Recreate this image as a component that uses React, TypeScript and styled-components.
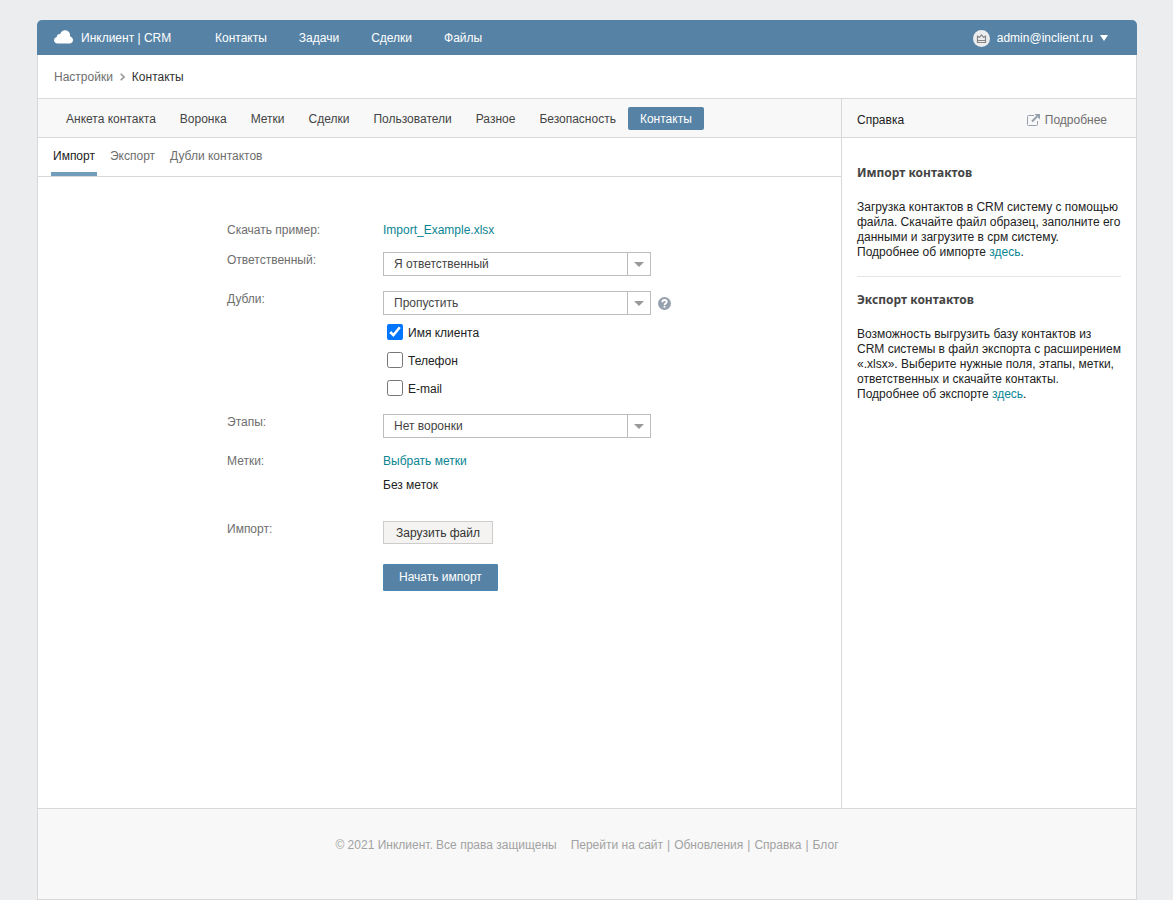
import React from "react";
import styled, { createGlobalStyle } from "styled-components";

const color = {
  brand: "#5683a5",
  line: "#d8d8d8",
  bar: "#f8f8f8",
  text: "#222",
  dim: "#6e6e6e",
  link: "#0a8593",
};

const GlobalStyle = createGlobalStyle`
  *, *::before, *::after { box-sizing: border-box; }
  body {
    margin: 0;
    background: #ecedef;
    color: ${color.text};
    font: 12px/15px "Liberation Sans", Arial, sans-serif;
  }
  a { color: inherit; text-decoration: none; }
  button, select, input { font: inherit; }
  h2, p { margin: 0; }
`;

const Page = styled.div`
  display: flex;
  flex-direction: column;
  min-height: 100vh;
  padding: 20px 36px 0 37px;
`;

const Header = styled.header`
  display: flex;
  align-items: center;
  height: 35px;
  padding: 1px 29px 0 17px;
  border-radius: 5px 5px 0 0;
  background: ${color.brand};
  color: #fff;
  font-weight: 500;
`;

const Brand = styled.a`
  display: flex;
  align-items: center;
  gap: 8px;
  width: 161px;

  svg { margin-bottom: 2px; }
`;

const MainNav = styled.nav`
  display: flex;
  gap: 32px;
  flex: 1;
  padding-top: 1px;
`;

const Account = styled.button`
  display: flex;
  align-items: center;
  gap: 7px;
  padding: 0;
  border: 0;
  background: none;
  color: inherit;
  font-weight: 500;
  cursor: pointer;
`;

const Sheet = styled.div`
  flex: 1;
  display: flex;
  flex-direction: column;
  border: 1px solid ${color.line};
  border-top: 0;
  background: #fff;
`;

const Breadcrumbs = styled.nav`
  display: flex;
  align-items: center;
  gap: 7px;
  height: 44px;
  padding: 1px 0 0 16px;
  border-bottom: 1px solid ${color.line};
  color: ${color.dim};

  [aria-current] { color: #333; }
`;

const Columns = styled.div`
  flex: 1;
  display: grid;
  grid-template-columns: minmax(0, 1fr) 295px;
`;

const Main = styled.main`
  min-width: 0;
`;

const Tabs = styled.nav`
  display: flex;
  align-items: center;
  height: 39px;
  padding-left: 16px;
  border-bottom: 1px solid ${color.line};
  background: ${color.bar};
`;

const Tab = styled.a<{ $active?: boolean }>`
  padding: 5px 12px 3px;
  border-radius: 2px;
  background: ${(p) => (p.$active ? color.brand : "transparent")};
  color: ${(p) => (p.$active ? "#fff" : "#444")};
  font-weight: ${(p) => (p.$active ? 500 : 400)};
`;

const SubTabs = styled.nav`
  display: flex;
  gap: 11px;
  height: 39px;
  padding-left: 13px;
  border-bottom: 1px solid ${color.line};
`;

const SubTab = styled.a<{ $active?: boolean }>`
  padding: 11px 2px 0;
  border-bottom: 4px solid ${(p) => (p.$active ? "#719dbc" : "transparent")};
  color: ${(p) => (p.$active ? "#222" : color.dim)};
`;

const Form = styled.form`
  display: flex;
  flex-direction: column;
  gap: 14px;
  padding: 45px 16px 45px 189px;
`;

const FormRow = styled.div<{ $after?: number }>`
  display: grid;
  grid-template-columns: 156px minmax(0, 1fr);
  align-items: start;
  margin-bottom: ${(p) => p.$after ?? 1}px;
`;

const Caption = styled.label`
  padding-top: 1px;
  color: ${color.dim};
`;

const Value = styled.div<{ $gap?: number }>`
  display: flex;
  flex-direction: column;
  align-items: flex-start;
  gap: ${(p) => p.$gap ?? 0}px;
`;

const Link = styled.a`
  color: ${color.link};
`;

const FieldLink = styled(Link)`
  padding-top: 1px;
`;

const Picker = styled.div`
  display: flex;
  align-items: center;
  gap: 7px;
`;

const SelectFrame = styled.div`
  position: relative;
  width: 268px;
  max-width: 100%;
`;

const SelectBox = styled.select`
  display: block;
  appearance: none;
  width: 100%;
  height: 24px;
  padding: 0 34px 0 10px;
  border: 1px solid #bdbdbd;
  border-radius: 0;
  background: #fff;
  color: #444;
`;

const SelectArrow = styled.span`
  position: absolute;
  inset: 1px 1px 1px auto;
  display: grid;
  place-items: center;
  width: 23px;
  border-left: 1px solid #bdbdbd;
  pointer-events: none;
`;

const Check = styled.label`
  display: flex;
  align-items: center;
  gap: 5px;
  height: 22px;
  padding-left: 4px;
`;

const CheckText = styled.span`
  padding-top: 2px;
`;

const CheckInput = styled.input`
  width: 16px;
  height: 16px;
  margin: 0;
  accent-color: #0075ff;
`;

const UploadButton = styled.button`
  height: 23px;
  padding: 1px 12px 0;
  border: 1px solid #ccc;
  background: #f4f3f2;
  color: #333;
`;

const SubmitButton = styled.button`
  height: 27px;
  margin-top: 5px;
  padding: 0 15px;
  border: 1px solid #4d86b0;
  border-radius: 1px;
  background: ${color.brand};
  color: #fff;
  font-weight: 500;
`;

const Help = styled.aside`
  border-left: 1px solid ${color.line};
`;

const HelpBar = styled.div`
  display: flex;
  align-items: center;
  justify-content: space-between;
  height: 39px;
  padding: 4px 29px 0 15px;
  border-bottom: 1px solid ${color.line};
  background: ${color.bar};
`;

const MoreLink = styled.a`
  display: flex;
  align-items: center;
  gap: 5px;
  color: ${color.dim};
`;

const HelpBody = styled.div`
  padding: 12px 15px;
`;

const HelpSection = styled.section`
  padding: 15px 0 16px;

  & + & { border-top: 1px solid #e2e5ea; }
`;

const HelpTitle = styled.h2`
  margin-bottom: 20px;
  color: #444;
  font: bold 12px/15px "Noto Sans", sans-serif;
`;

const Footer = styled.footer`
  display: flex;
  justify-content: center;
  gap: 14px;
  height: 91px;
  padding-top: 29px;
  border-top: 1px solid ${color.line};
  background: ${color.bar};
  color: #a2a2a2;
`;

const FooterLinks = styled.nav`
  display: flex;
  gap: 4px;
`;

const CloudIcon = () => (
  <svg width="19" height="14" viewBox="0 0 19 14" fill="#fff" aria-hidden="true">
    <path d="M3.500 13.500C1.500 13.500 0 12.200 0 10.300c0-1.700 1.100-3 2.800-3.400.1-2 1.400-3 3.400-2.800C7 1.600 8.700.2 11 .2c3 0 5.200 2.300 5.100 5.500v.9c1.700.4 2.900 1.800 2.900 3.500 0 2-1.500 3.400-3.500 3.400z" />
  </svg>
);

const CrownBadge = () => (
  <svg width="17" height="17" viewBox="0 0 17 17" fill="none" aria-hidden="true">
    <circle cx="8.500" cy="8.500" r="8.500" fill="#ecedef" />
    <path d="M4.500 12.500V6.300L6.500 7.300 8.500 4.900l2 2.400 2-1v6.200zM4.500 10.500h8" stroke="#858585" strokeWidth="1.200" />
  </svg>
);

const Triangle = ({ width, height, fill }: { width: number; height: number; fill: string }) => (
  <svg width={width} height={height} viewBox="0 0 10 10" preserveAspectRatio="none" fill={fill} aria-hidden="true">
    <path d="M0 0h10L5 10z" />
  </svg>
);

const Chevron = () => (
  <svg width="5" height="8" viewBox="0 0 5 8" fill="none" stroke="#999" strokeWidth="1.600" aria-hidden="true">
    <path d="M.7.7 4 4 .7 7.300" />
  </svg>
);

const ExternalIcon = () => (
  <svg width="13" height="12" viewBox="0 0 13 12" fill="none" stroke="#969fae" aria-hidden="true">
    <path d="M7 1.500H1.500a1 1 0 0 0-1 1v8a1 1 0 0 0 1 1h8a1 1 0 0 0 1-1V7" />
    <path d="M5 7.500 10 2.500" strokeWidth="2" />
    <path d="M7.500 0H13v5.500z" fill="#969fae" stroke="none" />
  </svg>
);

const HelpIcon = () => (
  <svg width="13" height="13" viewBox="0 0 13 13" fill="none" role="img" aria-label="Подсказка">
    <circle cx="6.500" cy="6.500" r="6.500" fill="#969fae" />
    <path d="M4.300 5.200C4.300 3.800 5.200 3 6.500 3s2.200.8 2.200 1.900C8.700 6.200 6.600 6.200 6.600 8" stroke="#fff" strokeWidth="1.800" />
    <path d="M5.600 8.800h1.900v1.800H5.600z" fill="#fff" />
  </svg>
);

function Dropdown({ id, option }: { id: string; option: string }) {
  return (
    <SelectFrame>
      <SelectBox id={id}>
        <option>{option}</option>
      </SelectBox>
      <SelectArrow>
        <Triangle width={10} height={5} fill="#999" />
      </SelectArrow>
    </SelectFrame>
  );
}

const sections = ["Контакты", "Задачи", "Сделки", "Файлы"];
const settingsTabs = ["Анкета контакта", "Воронка", "Метки", "Сделки", "Пользователи", "Разное", "Безопасность", "Контакты"];
const contactTabs = ["Импорт", "Экспорт", "Дубли контактов"];
const duplicateFields = ["Имя клиента", "Телефон", "E-mail"];
const footerLinks = ["Перейти на сайт", "Обновления", "Справка", "Блог"];

export default function App() {
  return (
    <Page>
      <GlobalStyle />
      <Header>
        <Brand href="#">
          <CloudIcon />
          Инклиент | CRM
        </Brand>
        <MainNav>
          {sections.map((name) => (
            <a href="#" key={name}>{name}</a>
          ))}
        </MainNav>
        <Account type="button">
          <CrownBadge />
          admin@inclient.ru
          <Triangle width={8} height={6} fill="#fff" />
        </Account>
      </Header>
      <Sheet>
        <Breadcrumbs>
          <a href="#">Настройки</a>
          <Chevron />
          <span aria-current="page">Контакты</span>
        </Breadcrumbs>
        <Columns>
          <Main>
            <Tabs>
              {settingsTabs.map((name, i) => (
                <Tab href="#" key={name} $active={i === settingsTabs.length - 1}>{name}</Tab>
              ))}
            </Tabs>
            <SubTabs>
              {contactTabs.map((name, i) => (
                <SubTab href="#" key={name} $active={i === 0}>{name}</SubTab>
              ))}
            </SubTabs>
            <Form>
              <FormRow $after={0}>
                <Caption as="span">Скачать пример:</Caption>
                <Value><FieldLink href="#">Import_Example.xlsx</FieldLink></Value>
              </FormRow>
              <FormRow>
                <Caption htmlFor="owner">Ответственный:</Caption>
                <Value><Dropdown id="owner" option="Я ответственный" /></Value>
              </FormRow>
              <FormRow>
                <Caption htmlFor="duplicates">Дубли:</Caption>
                <Value $gap={6}>
                  <Picker>
                    <Dropdown id="duplicates" option="Пропустить" />
                    <HelpIcon />
                  </Picker>
                  {duplicateFields.map((name, i) => (
                    <Check key={name}>
                      <CheckInput type="checkbox" defaultChecked={i === 0} />
                      <CheckText>{name}</CheckText>
                    </Check>
                  ))}
                </Value>
              </FormRow>
              <FormRow>
                <Caption htmlFor="stages">Этапы:</Caption>
                <Value><Dropdown id="stages" option="Нет воронки" /></Value>
              </FormRow>
              <FormRow $after={14}>
                <Caption as="span">Метки:</Caption>
                <Value $gap={9}>
                  <FieldLink href="#">Выбрать метки</FieldLink>
                  <span>Без меток</span>
                </Value>
              </FormRow>
              <FormRow>
                <Caption htmlFor="upload">Импорт:</Caption>
                <Value $gap={15}>
                  <UploadButton id="upload" type="button">Зарузить файл</UploadButton>
                  <SubmitButton type="button">Начать импорт</SubmitButton>
                </Value>
              </FormRow>
            </Form>
          </Main>
          <Help>
            <HelpBar>
              <span>Справка</span>
              <MoreLink href="#">
                <ExternalIcon />
                Подробнее
              </MoreLink>
            </HelpBar>
            <HelpBody>
              <HelpSection>
                <HelpTitle>Импорт контактов</HelpTitle>
                <p>
                  Загрузка контактов в CRM систему с помощью файла. Скачайте файл образец, заполните его данными и
                  загрузите в срм систему.
                  <br />
                  Подробнее об импорте <Link href="#">здесь</Link>.
                </p>
              </HelpSection>
              <HelpSection>
                <HelpTitle>Экспорт контактов</HelpTitle>
                <p>
                  Возможность выгрузить базу контактов из CRM системы в файл экспорта с расширением «.xlsx». Выберите
                  нужные поля, этапы, метки, ответственных и скачайте контакты.
                  <br />
                  Подробнее об экспорте <Link href="#">здесь</Link>.
                </p>
              </HelpSection>
            </HelpBody>
          </Help>
        </Columns>
        <Footer>
          <span>© 2021 Инклиент. Все права защищены</span>
          <FooterLinks>
            {footerLinks.map((name, i) => (
              <React.Fragment key={name}>
                {i > 0 && <span>|</span>}
                <a href="#">{name}</a>
              </React.Fragment>
            ))}
          </FooterLinks>
        </Footer>
      </Sheet>
    </Page>
  );
}
